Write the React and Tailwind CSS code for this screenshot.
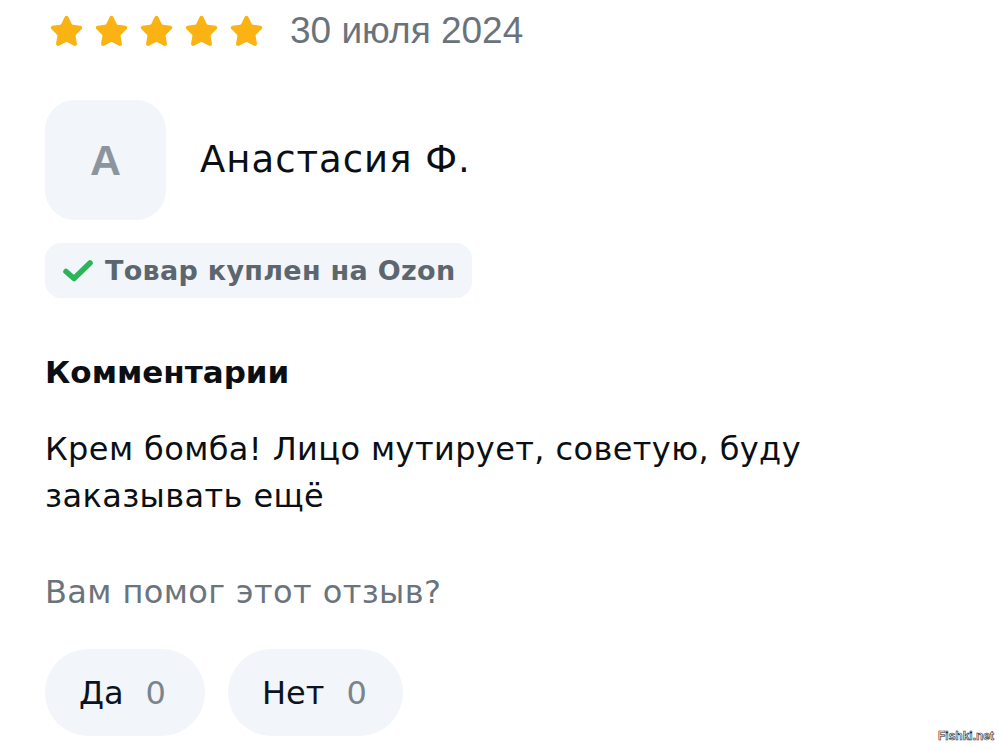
import React from "react";
import { Star } from "lucide-react";

const Check = () => (
  <svg width="34" height="26" viewBox="0 0 34 26" fill="none">
    <path
      d="M5 13.5 L13 20.5 L29 5"
      stroke="#2bb45a"
      strokeWidth="5.5"
      strokeLinecap="round"
      strokeLinejoin="round"
    />
  </svg>
);

const VoteButton = ({ label, count, wide }) => (
  <button
    className={`flex h-[87px] items-center rounded-full bg-[#f2f5f9] px-[34px] ${
      wide ? "w-[175px]" : "w-[160px]"
    }`}
  >
    <span className="text-[32px] leading-[40px] text-[#0a1420]">{label}</span>
    <span className="ml-[22px] text-[32px] leading-[40px] text-[#7a848d]">{count}</span>
  </button>
);

export default function App() {
  return (
    <div
      className="relative h-[749px] w-[1000px] overflow-hidden bg-white pl-[45px]"
      style={{ fontFamily: "'DejaVu Sans', 'Noto Sans', sans-serif" }}
    >
      {/* рейтинг и дата */}
      <div className="flex h-[62px] items-center">
        <div className="flex gap-[10px] pl-[4px]">
          {[0, 1, 2, 3, 4].map((i) => (
            <Star
              key={i}
              size={35}
              fill="#fbb313"
              stroke="#fbb313"
              strokeWidth={1.6}
              strokeLinejoin="round"
            />
          ))}
        </div>
        <span
          className="ml-[26px] text-[37px] leading-[44px] text-[#6a737b]"
          style={{ fontFamily: "'Liberation Sans', Arial, sans-serif" }}
        >
          30 июля 2024
        </span>
      </div>

      {/* автор */}
      <div className="mt-[38px] flex items-center">
        <div className="flex h-[120px] w-[121px] items-center justify-center rounded-[30px] bg-[#f2f5f9]">
          <span
            className="text-[43px] font-semibold text-[#8c959e]"
            style={{ fontFamily: "'Liberation Sans', Arial, sans-serif" }}
          >
            A
          </span>
        </div>
        <span className="ml-[34px] text-[37px] leading-[44px] tracking-[1px] text-[#0b0f14]">
          Анастасия Ф.
        </span>
      </div>

      {/* бейдж */}
      <div className="mt-[23px] flex h-[55px] w-[427px] items-center rounded-[16px] bg-[#f2f5f9] pl-[16px]">
        <Check />
        <span className="ml-[10px] text-[27px] font-semibold leading-[36px] tracking-[0.3px] text-[#5c666f]">
          Товар куплен на Ozon
        </span>
      </div>

      {/* комментарий */}
      <h2 className="mt-[54px] text-[31px] font-bold leading-[40px] text-[#0b0f14]">
        Комментарии
      </h2>
      <p className="mt-[34px] w-[900px] text-[32px] leading-[47px] tracking-[0.4px] text-[#0b0f14]">
        Крем бомба! Лицо мутирует, советую, буду
        <br />
        заказывать ещё
      </p>

      <p className="mt-[52px] text-[32px] leading-[40px] tracking-[0.4px] text-[#6a747d]">
        Вам помог этот отзыв?
      </p>

      <div className="mt-[37px] flex gap-[23px]">
        <VoteButton label="Да" count="0" />
        <VoteButton label="Нет" count="0" wide />
      </div>

      {/* водяной знак */}
      <span
        className="absolute bottom-[4px] right-[6px] text-[12px] font-bold text-white"
        style={{
          fontFamily: "'Liberation Sans', Arial, sans-serif",
          WebkitTextStroke: "0.6px #222",
        }}
      >
        Fishki.net
      </span>
    </div>
  );
}
